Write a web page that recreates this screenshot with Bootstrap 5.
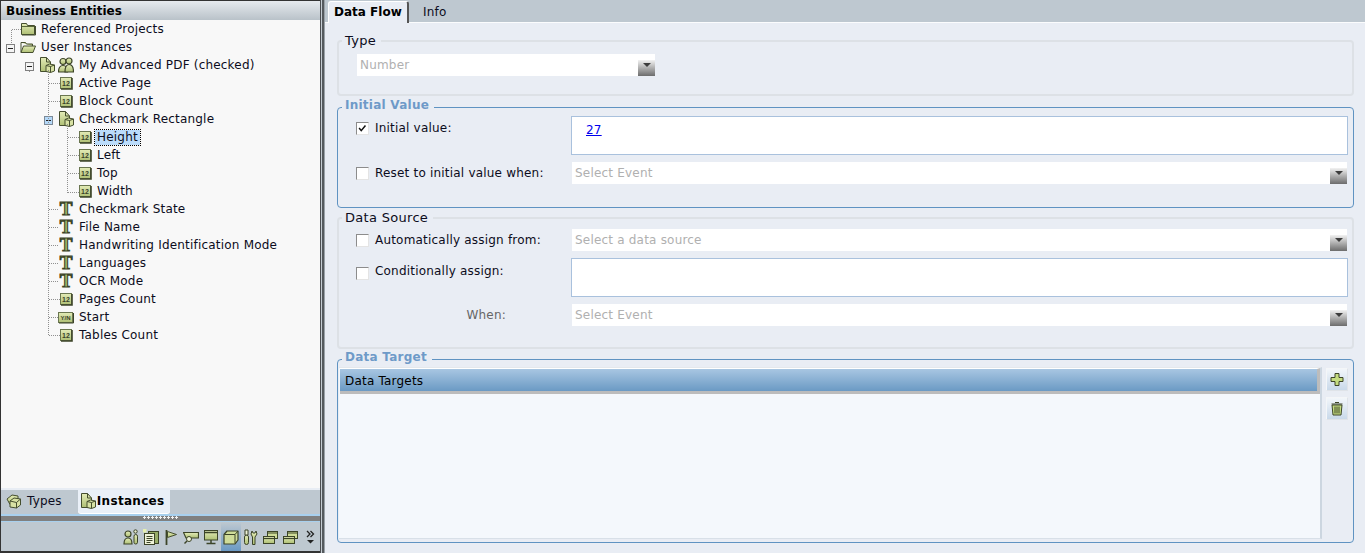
<!doctype html>
<html lang="en">
<head>
<meta charset="utf-8">
<title>Business Entities</title>
<link href="https://cdn.jsdelivr.net/npm/bootstrap@5.3.0/dist/css/bootstrap.min.css" rel="stylesheet">
<style>
html,body{height:553px;overflow:hidden}
body{font-family:"DejaVu Sans",Verdana,sans-serif;font-size:12px;line-height:14px;letter-spacing:.2px;color:#0c0c20;background:#e9edf4}
.shell{height:553px}
.leftp{width:320px;flex:none;border-top:1px solid #333;border-left:1px solid #333;border-bottom:2px solid #333;background:#f8f8f8;position:relative}
.lhead{height:19px;flex:none;font-weight:700;font-size:12px;letter-spacing:0;padding:3px 0 0 5px;color:#000;background:linear-gradient(#e6eaee,#b9c2c9)}
.trow{height:18px;white-space:nowrap}
.d1{padding-left:5px}.d2{padding-left:24px}.d3{padding-left:43px}.d4{padding-left:62px}
.tog{width:9px;height:9px;flex:none;border:1px solid #808080;background:#f4f4f4;position:relative;margin-top:2px}
.tog::after{content:"";position:absolute;left:1px;right:1px;top:3px;height:1px;background:#222}
.tog.on{background:#b4d8f8;border-color:#7c8a98}
.slot{width:9px;flex:none}
.ic{width:16px;height:16px;flex:none;display:block}
.g5{margin-left:5px}.g3{margin-left:3px}.g4{margin-left:4px}.g2{margin-left:2px}.g1{margin-left:1px}
.sel{background:#bbdcfb;outline:1px dotted #000;padding:0 2px;margin-left:2px;line-height:15px}
.guides{position:absolute;left:0;top:0;pointer-events:none}
.ltabs{height:26px;flex:none;background:#bec8d0;border-top:2px solid #e8edf4;padding-left:5px}
.ltab{height:23px;padding:0 5px 2px 0;white-space:nowrap}
.ltab.act{font-weight:700;letter-spacing:.3px;background:#eaf0f8;color:#000;border-radius:0 0 3px 3px;box-shadow:0 1px 0 #fff;margin-left:11px;padding-left:0;padding-right:6px}
.sbar{height:8px;flex:none;background:#808080;border-top:2px solid #a8d0ee;border-bottom:1px solid #a8d0ee}
.grip{width:36px;height:3px;background:radial-gradient(circle at 1.5px 1.5px,#f0f0f0 1.2px,transparent 1.4px) 0 0/4px 3px repeat-x}
.tbar{height:29px;flex:none;background:#bec8d0;padding-right:1px}
.tool{width:20px;height:29px;flex:none}
.tool.act{background:linear-gradient(#bec8d0,#6b9ac4)}
.more{width:18px;flex:none}
.divd{width:5px;flex:none;background:linear-gradient(90deg,#4c4f52 0,#4c4f52 1px,#c4ccd2 1px,#c4ccd2 2px,#555a5e 2px,#555a5e 4px,#9aa2a8 4px)}
.rightp{min-width:0;background:#e9edf4}
.tabbar{height:23px;flex:none;background:#bec8d0;border-bottom:1px solid #fbfcfd;padding:1px 0 0 3px}
.rtab{height:22px;padding:4px 6px 0 6px;white-space:nowrap}
.rtab.act{width:81px;font-weight:700;letter-spacing:0;color:#000;background:#e9edf4;border:1px solid #fff;border-right:2px solid #555;border-bottom:0;border-radius:3px 3px 0 0;margin-bottom:-1px;padding:3px 5px 0}
.rtab.off{margin-left:8px}
.pane{padding:11px 11px 0 12px}
.grp{border:2px solid #dde1e6;border-radius:4px;margin:0;display:flex;flex-direction:column;min-width:0}
.grp>legend{float:none;width:auto;font-size:13px;letter-spacing:.3px;line-height:14px;margin-bottom:0;padding:0 5px 0 3px;color:#0c0c20}
.grp.blue{border:1px solid #5f93c2}
.grp.blue>legend{font-size:12px;letter-spacing:.25px;font-weight:700;color:#6e9ac8;padding-bottom:4px}
.gtype{height:62px;padding:6px 0 0 18px}
.gtype>legend{margin-left:-15px}
.ginit{height:110px;padding:0 5px 0 18px;margin-top:2px}
.ginit>legend,.gsrc>legend{margin-left:-14px}
.gsrc{height:138px;padding:4px 4px 0 17px;margin-top:3px}
.gtgt{height:193px;padding:0 0 0 1px;margin-top:1px}
.gtgt>legend{margin:0 0 -1px 3px}
.rows{gap:7px}
.chk{width:13px;height:13px;flex:none;background:#fff;border:1px solid #8c8c8c;border-right-color:#e4e4e4;border-bottom-color:#e4e4e4;display:block}
.lab{width:202px;flex:none;padding-left:6px}
.c6{margin-top:6px}.c9{margin-top:9px}.l5{margin-top:5px}.l7{margin-top:6px}
.mute{color:#666;text-align:right;padding-right:65px}
.combo{height:22px;background:#fff;color:#b0b0b0;padding-left:3px;margin:0 1px;min-width:0}
.combo .tx{line-height:22px}
.arrow{width:17px;height:16px;flex:none;align-self:flex-end;background:linear-gradient(#f2f2f2,#6c6c6c);display:flex;justify-content:center;padding-top:3px}
.arrow::before{content:"";width:0;height:0;border-left:4px solid transparent;border-right:4px solid transparent;border-top:4px solid #3c3c3c}
.cw{width:298px;flex:none;margin:0}
.area{height:39px;background:#fff;border:1px solid #a9c1dd;padding:6px 14px}
.area a{color:#0000ee}
.dlist{height:172px;background:#f4f8fc;border-right:2px solid #ccd6e0;border-bottom:1px solid #d8e0e8;border-top:1px solid #e4e8ec}
.dhead{height:26px;flex:none;background:linear-gradient(#a8c6e2,#6b9ac4);border-top:1px solid #fff;border-bottom:3px solid #bcbcbc;padding:5px 0 0 5px;color:#000;border-right:3px solid #bcbcbc;margin:0 0 0 1px}
.tbtns{width:31px;flex:none;padding:1px 0 0 4px;gap:6px}
.sq{width:22px;height:23px;background:linear-gradient(#f2f6fa,#c9d9ea);border:1px solid #f4f6f8;border-right-color:#dfe3e8;border-bottom-color:#dfe3e8;padding:2px}
</style>
</head>
<body>
<svg width="0" height="0" class="d-block position-absolute">
<defs>
<linearGradient id="gg" x1="0" y1="0" x2="0" y2="1"><stop offset="0" stop-color="#e4ecb8"/><stop offset="1" stop-color="#aebf74"/></linearGradient>
<symbol id="i-fold" viewBox="0 0 16 16"><path d="M1.500 2.500h5l1 2h7v9h-13z" fill="url(#gg)" stroke="#454e2e"/><path d="M2 5.500h12" stroke="#5a6638"/><path d="M15.500 5v9H2" fill="none" stroke="#454e2e"/></symbol>
<symbol id="i-open" viewBox="0 0 16 16"><path d="M1 3.500h4.500l1 1.500h6v2" fill="#b8c684" stroke="#454e2e"/><path d="M1 13.500V3.500" stroke="#454e2e"/><path d="M1 13.500l2.500-6.500h12l-2.500 6.500z" fill="url(#gg)" stroke="#454e2e"/></symbol>
<symbol id="i-inst" viewBox="0 0 16 16"><path d="M1.500 .5h6l4 4.500v9.500h-10z" fill="url(#gg)" stroke="#454e2e"/><path d="M7.500 .5v4.500h4" fill="none" stroke="#454e2e"/><path d="M7 8.500l3.500-1.500 5 1v6l-4 1.500-4.500-1z" fill="#d8e2a4" stroke="#454e2e"/><path d="M7 8.500l4.500 1 4-1.500M11.500 9.500v6" fill="none" stroke="#454e2e"/></symbol>
<symbol id="i-ppl" viewBox="0 0 16 16"><circle cx="5" cy="4.500" r="3" fill="url(#gg)" stroke="#3c4428" stroke-width="1.200"/><circle cx="11" cy="4" r="3" fill="url(#gg)" stroke="#3c4428" stroke-width="1.200"/><path d="M.5 15c0-4 1.500-6.500 4.500-6.500 3 0 4.500 2.500 4.500 6.500z" fill="url(#gg)" stroke="#3c4428" stroke-width="1.200"/><path d="M7 15c0-4 1-7.500 4-7.500 3 0 4.500 3 4.500 7.500z" fill="url(#gg)" stroke="#3c4428" stroke-width="1.200"/></symbol>
<symbol id="i-num" viewBox="0 0 16 16"><rect x="2.500" y="2.500" width="11" height="11" fill="url(#gg)" stroke="#6a7650"/><path d="M14 3v11H3" fill="none" stroke="#3c4428" stroke-width="1.600"/><text x="8" y="10.500" text-anchor="middle" font-family="Liberation Sans,sans-serif" font-size="7" font-weight="700" letter-spacing="0" fill="#39422a">12</text></symbol>
<symbol id="i-vn" viewBox="0 0 16 16"><rect x=".5" y="3.500" width="14" height="10" fill="url(#gg)" stroke="#6a7650"/><path d="M15.500 4v10H1" fill="none" stroke="#3c4428"/><text x="7.500" y="11" text-anchor="middle" font-family="Liberation Sans,sans-serif" font-size="6" font-weight="700" letter-spacing="0" fill="#39422a">Y/N</text></symbol>
<symbol id="i-t" viewBox="0 0 16 16"><text x="8" y="14" text-anchor="middle" font-family="Liberation Serif,serif" font-size="19" font-weight="700" letter-spacing="0" fill="#a4b96c" stroke="#3c4428" stroke-width="1.100">T</text></symbol>
<symbol id="i-cube" viewBox="0 0 16 16"><path d="M1 5.500l3-3.500h11v9l-3 4H1z" fill="#cfdc98" stroke="#3c4428" stroke-width="1.200" stroke-linejoin="round"/><path d="M1.500 5.500H12v9M12 5.500l3-3.500" fill="none" stroke="#3c4428"/></symbol>
<symbol id="i-type" viewBox="0 0 16 16"><path d="M1 6l5-4 6 1v5l-3 4-5-.5z" fill="url(#gg)" stroke="#454e2e"/><path d="M4 8l4-3 6.500 1v6l-4 3-6.500-1z" fill="#d8e2a4" stroke="#454e2e"/><path d="M4 8l6.500 1.500 4-3.500M10.500 9.500V15" fill="none" stroke="#454e2e"/></symbol>
<symbol id="i-people1" viewBox="0 0 16 16"><circle cx="5" cy="5" r="3" fill="url(#gg)" stroke="#3c4428" stroke-width="1.200"/><path d="M1 15c0-4 1-6 4-6s4 2 4 6z" fill="url(#gg)" stroke="#3c4428" stroke-width="1.200"/><circle cx="12.500" cy="2.500" r="1.700" fill="#e8ecd0" stroke="#3c4428"/><rect x="11" y="5.500" width="3.500" height="9.500" rx="1.700" fill="url(#gg)" stroke="#3c4428"/></symbol>
<symbol id="i-page" viewBox="0 0 16 16"><rect x="5.500" y="2.500" width="10" height="12" fill="#98ac68" stroke="#3c4428"/><rect x="1.500" y="4.500" width="10" height="11" fill="#eef2d8" stroke="#3c4428"/><path d="M3.500 7.500h6M3.500 9.500h6M3.500 11.500h6M3.500 13.500h4" stroke="#3c4428"/><rect x="0" y="0" width="3.500" height="3.500" fill="#e6f0b0"/></symbol>
<symbol id="i-flag" viewBox="0 0 16 16"><path d="M3.500 1v15" stroke="#3c4428" stroke-width="1.800"/><path d="M4.500 2.500l9 3-9 3z" fill="url(#gg)" stroke="#454e2e"/></symbol>
<symbol id="i-sign" viewBox="0 0 16 16"><path d="M.5 3.500h15V9H9L3 9z" fill="url(#gg)" stroke="#3c4428" stroke-width="1.200"/><circle cx="6" cy="10" r="2.500" fill="#eef2d8" stroke="#3c4428"/><path d="M4 12l-2.500 2.500" stroke="#3c4428" stroke-width="1.500"/></symbol>
<symbol id="i-mon" viewBox="0 0 16 16"><rect x="1.500" y="1.500" width="13" height="9.500" fill="url(#gg)" stroke="#3c4428"/><path d="M1 3.500h14" stroke="#3c4428" stroke-width="1.500"/><path d="M8 11v3M3.500 14.500h9" stroke="#3c4428" stroke-width="1.500"/></symbol>
<symbol id="i-tools" viewBox="0 0 16 16"><rect x="1.500" y="6" width="4" height="9.500" rx="2" fill="url(#gg)" stroke="#3c4428"/><path d="M2 1h3v5H2z" fill="#eef2d8" stroke="#3c4428"/><path d="M9.500 15.500V8L8 5l1-3 1 2h2l1-2 1 3-2 3v7.500z" fill="url(#gg)" stroke="#3c4428"/></symbol>
<symbol id="i-wins" viewBox="0 0 16 16"><rect x="4.500" y="2.500" width="10" height="7" fill="#cfdc98" stroke="#3c4428"/><path d="M4.500 4h10" stroke="#3c4428"/><rect x=".5" y="7.500" width="11" height="7" fill="url(#gg)" stroke="#3c4428"/><path d="M.5 9.500h11" stroke="#3c4428" stroke-width="1.200"/></symbol>
</defs>
</svg>

<div class="shell d-flex">
  <aside class="leftp d-flex flex-column">
    <div class="lhead">Business Entities</div>
    <div class="tree flex-grow-1">
      <div class="trow d-flex align-items-center d1"><span class="slot"></span><svg class="ic g5"><use href="#i-fold"/></svg><span class="g5">Referenced Projects</span></div>
      <div class="trow d-flex align-items-center d1"><span class="tog"></span><svg class="ic g5"><use href="#i-open"/></svg><span class="g5">User Instances</span></div>
      <div class="trow d-flex align-items-center d2"><span class="tog"></span><svg class="ic g5"><use href="#i-inst"/></svg><svg class="ic g3"><use href="#i-ppl"/></svg><span class="g5">My Advanced PDF (checked)</span></div>
      <div class="trow d-flex align-items-center d3"><span class="slot"></span><svg class="ic g5"><use href="#i-num"/></svg><span class="g5">Active Page</span></div>
      <div class="trow d-flex align-items-center d3"><span class="slot"></span><svg class="ic g5"><use href="#i-num"/></svg><span class="g5">Block Count</span></div>
      <div class="trow d-flex align-items-center d3"><span class="tog on"></span><svg class="ic g5"><use href="#i-inst"/></svg><span class="g5">Checkmark Rectangle</span></div>
      <div class="trow d-flex align-items-center d4"><span class="slot"></span><svg class="ic g5"><use href="#i-num"/></svg><span class="sel">Height</span></div>
      <div class="trow d-flex align-items-center d4"><span class="slot"></span><svg class="ic g5"><use href="#i-num"/></svg><span class="g4">Left</span></div>
      <div class="trow d-flex align-items-center d4"><span class="slot"></span><svg class="ic g5"><use href="#i-num"/></svg><span class="g4">Top</span></div>
      <div class="trow d-flex align-items-center d4"><span class="slot"></span><svg class="ic g5"><use href="#i-num"/></svg><span class="g4">Width</span></div>
      <div class="trow d-flex align-items-center d3"><span class="slot"></span><svg class="ic g5"><use href="#i-t"/></svg><span class="g5">Checkmark State</span></div>
      <div class="trow d-flex align-items-center d3"><span class="slot"></span><svg class="ic g5"><use href="#i-t"/></svg><span class="g5">File Name</span></div>
      <div class="trow d-flex align-items-center d3"><span class="slot"></span><svg class="ic g5"><use href="#i-t"/></svg><span class="g5">Handwriting Identification Mode</span></div>
      <div class="trow d-flex align-items-center d3"><span class="slot"></span><svg class="ic g5"><use href="#i-t"/></svg><span class="g5">Languages</span></div>
      <div class="trow d-flex align-items-center d3"><span class="slot"></span><svg class="ic g5"><use href="#i-t"/></svg><span class="g5">OCR Mode</span></div>
      <div class="trow d-flex align-items-center d3"><span class="slot"></span><svg class="ic g5"><use href="#i-num"/></svg><span class="g5">Pages Count</span></div>
      <div class="trow d-flex align-items-center d3"><span class="slot"></span><svg class="ic g5"><use href="#i-vn"/></svg><span class="g5">Start</span></div>
      <div class="trow d-flex align-items-center d3"><span class="slot"></span><svg class="ic g5"><use href="#i-num"/></svg><span class="g5">Tables Count</span></div>
    </div>
    <svg class="guides" width="100" height="345" shape-rendering="crispEdges"><path d="M10.500 29v14M10.500 28.500h9M28.500 70v2M47.500 69v265M47.500 82.500h11M47.500 100.500h11M47.500 208.500h10M47.500 226.500h10M47.500 244.500h10M47.500 262.500h10M47.500 280.500h10M47.500 298.500h11M47.500 316.500h10M47.500 334.500h11M66.500 123v69M66.500 136.500h11M66.500 154.500h11M66.500 172.500h11M66.500 191.500h11" fill="none" stroke="#909090" stroke-dasharray="1 1"/></svg>
    <div class="ltabs d-flex">
      <div class="ltab d-flex align-items-center"><svg class="ic"><use href="#i-type"/></svg><span class="g5">Types</span></div>
      <div class="ltab act d-flex align-items-center"><svg class="ic g2"><use href="#i-inst"/></svg><span class="g1">Instances</span></div>
    </div>
    <div class="sbar d-flex justify-content-center"><div class="grip"></div></div>
    <div class="tbar d-flex justify-content-end align-items-center">
      <div class="tool d-flex align-items-center justify-content-center"><svg class="ic"><use href="#i-people1"/></svg></div>
      <div class="tool d-flex align-items-center justify-content-center"><svg class="ic"><use href="#i-page"/></svg></div>
      <div class="tool d-flex align-items-center justify-content-center"><svg class="ic"><use href="#i-flag"/></svg></div>
      <div class="tool d-flex align-items-center justify-content-center"><svg class="ic"><use href="#i-sign"/></svg></div>
      <div class="tool d-flex align-items-center justify-content-center"><svg class="ic"><use href="#i-mon"/></svg></div>
      <div class="tool act d-flex align-items-center justify-content-center"><svg class="ic"><use href="#i-cube"/></svg></div>
      <div class="tool d-flex align-items-center justify-content-center"><svg class="ic"><use href="#i-tools"/></svg></div>
      <div class="tool d-flex align-items-center justify-content-center"><svg class="ic"><use href="#i-wins"/></svg></div>
      <div class="tool d-flex align-items-center justify-content-center"><svg class="ic"><use href="#i-wins"/></svg></div>
      <div class="more d-flex align-items-center justify-content-center"><svg width="9" height="14" viewBox="0 0 9 14"><path d="M1 1l3 3-3 3M4.500 1l3 3-3 3" fill="none" stroke="#222" stroke-width="1.300"/><path d="M1 10h7l-3.500 3.500z" fill="#222"/></svg></div>
    </div>
  </aside>
  <div class="divd"></div>
  <main class="rightp flex-grow-1 d-flex flex-column">
    <div class="tabbar d-flex">
      <div class="rtab act">Data Flow</div>
      <div class="rtab off">Info</div>
    </div>
    <div class="pane d-flex flex-column">
      <fieldset class="grp gtype">
        <legend>Type</legend>
        <div class="combo cw d-flex justify-content-between"><span class="tx">Number</span><span class="arrow"></span></div>
      </fieldset>
      <fieldset class="grp blue ginit">
        <legend>Initial Value</legend>
        <div class="d-flex flex-column rows">
          <div class="d-flex">
            <svg class="chk c6" viewBox="0 0 13 13"><path d="M2.500 6l2.500 3 5-6" fill="none" stroke="#111" stroke-width="1.800"/></svg>
            <label class="lab l5">Initial value:</label>
            <div class="area flex-grow-1"><a href="#">27</a></div>
          </div>
          <div class="d-flex align-items-center">
            <span class="chk"></span>
            <label class="lab">Reset to initial value when:</label>
            <div class="combo flex-grow-1 d-flex justify-content-between"><span class="tx">Select Event</span><span class="arrow"></span></div>
          </div>
        </div>
      </fieldset>
      <fieldset class="grp gsrc">
        <legend>Data Source</legend>
        <div class="d-flex flex-column rows">
          <div class="d-flex align-items-center">
            <span class="chk"></span>
            <label class="lab">Automatically assign from:</label>
            <div class="combo flex-grow-1 d-flex justify-content-between"><span class="tx">Select a data source</span><span class="arrow"></span></div>
          </div>
          <div class="d-flex">
            <svg class="chk c9" viewBox="0 0 13 13"></svg>
            <label class="lab l7">Conditionally assign:</label>
            <div class="area flex-grow-1"></div>
          </div>
          <div class="d-flex align-items-center">
            <span class="chk opacity-0"></span>
            <label class="lab mute">When:</label>
            <div class="combo flex-grow-1 d-flex justify-content-between"><span class="tx">Select Event</span><span class="arrow"></span></div>
          </div>
        </div>
      </fieldset>
      <fieldset class="grp blue gtgt">
        <legend>Data Target</legend>
        <div class="d-flex">
          <div class="dlist flex-grow-1 d-flex flex-column">
            <div class="dhead">Data Targets</div>
          </div>
          <div class="tbtns d-flex flex-column">
            <div class="sq"><svg class="ic"><path d="M6 2.500h4v4h4v4h-4v4H6v-4H2v-4h4z" fill="#c4dc80" stroke="#3c4428"/></svg></div>
            <div class="sq"><svg class="ic"><path d="M3 5h10l-1 10H4z" fill="#c4dc80" stroke="#3c4428"/><path d="M2.500 4h11M6 2.500h4M6 6.500v7M8 6.500v7M10 6.500v7" stroke="#3c4428" fill="none"/></svg></div>
          </div>
        </div>
      </fieldset>
    </div>
  </main>
</div>
<script src="https://cdn.jsdelivr.net/npm/bootstrap@5.3.0/dist/js/bootstrap.bundle.min.js"></script>
</body>
</html>
